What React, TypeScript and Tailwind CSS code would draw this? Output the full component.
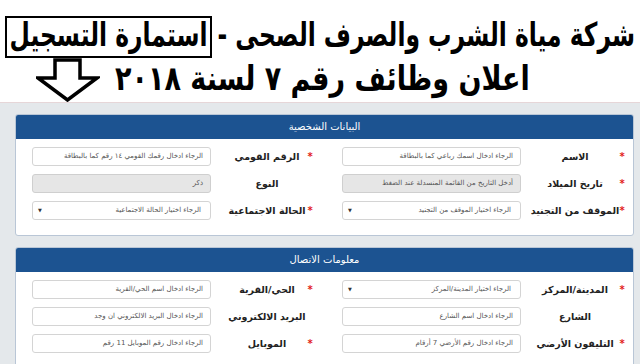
import React from "react";

const FONT = "font-['DejaVu_Sans',sans-serif]";

type Kind = "text" | "disabled" | "select";

function Input({ ph, kind }: { ph: string; kind: Kind }) {
  const base =
    "w-[179px] h-[19px] rounded-[3px] border flex items-center text-[7px] leading-none text-[#555] shrink-0";
  if (kind === "select") {
    return (
      <div className={`${base} bg-white border-[#d4d4d4] justify-between pr-[9px] pl-[5px]`}>
        <span>{ph}</span>
        <span className="text-[5px] text-[#333]">▼</span>
      </div>
    );
  }
  return (
    <div
      className={`${base} pr-[7px] ${
        kind === "disabled" ? "bg-[#e6e6e6] border-[#cfcfcf]" : "bg-white border-[#d4d4d4]"
      }`}
    >
      <span>{ph}</span>
    </div>
  );
}

function Half({
  label,
  req,
  ph,
  kind,
  labelW,
  gap,
}: {
  label: string;
  req: boolean;
  ph: string;
  kind: Kind;
  labelW: string;
  gap: string;
}) {
  return (
    <div className="flex items-center">
      <span className="w-[16px] text-center text-[#e21b1b] text-[10px] font-bold leading-none">
        {req ? "*" : ""}
      </span>
      <div className={`${labelW} flex justify-center`}>
        <span className="text-[9.5px] font-bold text-[#222] whitespace-nowrap leading-none">{label}</span>
      </div>
      <div className={gap} />
      <Input ph={ph} kind={kind} />
    </div>
  );
}

type F = { label: string; req: boolean; ph: string; kind: Kind };

function Row({ r, l }: { r: F; l: F }) {
  return (
    <div className="flex items-center pr-[3px] h-[19px]">
      <Half {...r} labelW="w-[78px]" gap="w-[15px]" />
      <div className="w-[24px]" />
      <Half {...l} labelW="w-[70px]" gap="w-[21px]" />
    </div>
  );
}

function Panel({ title, rows }: { title: string; rows: [F, F][] }) {
  return (
    <div className="ml-[15px] mr-[6px] rounded-[3px] border border-[#b9c6d6] bg-white overflow-hidden">
      <div className="h-[24px] bg-[#1c5391] flex items-center justify-center text-white text-[10px] leading-none">
        {title}
      </div>
      <div className="flex flex-col gap-[8px] pt-[8px] pb-[15px]">
        {rows.map((rw, i) => (
          <Row key={i} r={rw[0]} l={rw[1]} />
        ))}
      </div>
    </div>
  );
}

function Arrow() {
  return (
    <svg width="64" height="44" viewBox="0 0 64 44" className="shrink-0">
      <path
        d="M19 2 H44 V20 H61 L31.5 42 L2 20 H19 Z"
        fill="white"
        stroke="black"
        strokeWidth="3.5"
        strokeLinejoin="miter"
      />
    </svg>
  );
}

export default function App() {
  return (
    <div dir="rtl" className={`${FONT} w-[640px] h-[364px] overflow-hidden bg-[#e4e8eb]`}>
      <div className="h-[103px] bg-white border-b border-[#e6d6d8] flex flex-col">
        <div className="pt-[16px] pr-[5px] flex items-start h-[58px] text-[23.4px] font-bold text-black leading-none whitespace-nowrap">
          <span className="inline-block scale-y-[1.4] mt-[8px]">شركة مياة الشرب والصرف الصحى - </span>
          <span className="border-2 border-black h-[42px] px-[3px] mr-[5px] flex items-center">
            <span className="inline-block scale-y-[1.4] mb-[2px]">استمارة التسجيل</span>
          </span>
        </div>
        <div className="flex items-end h-[45px]" dir="ltr">
          <div className="ml-[36px] mt-auto">
            <Arrow />
          </div>
          <div
            dir="rtl"
            className="ml-[15px] mb-[10px] text-[27px] font-bold text-black leading-none whitespace-nowrap scale-y-[1.25]"
          >
            اعلان وظائف رقم ٧ لسنة ٢٠١٨
          </div>
        </div>
      </div>
      <div className="pt-[11px]">
        <Panel
          title="البيانات الشخصية"
          rows={[
            [
              { label: "الاسم", req: true, ph: "الرجاء ادخال اسمك رباعي كما بالبطاقة", kind: "text" },
              { label: "الرقم القومي", req: true, ph: "الرجاء ادخال رقمك القومي ١٤ رقم كما بالبطاقة", kind: "text" },
            ],
            [
              { label: "تاريخ الميلاد", req: true, ph: "أدخل التاريخ من القائمة المنسدلة عند الضغط", kind: "disabled" },
              { label: "النوع", req: false, ph: "ذكر", kind: "disabled" },
            ],
            [
              { label: "الموقف من التجنيد", req: true, ph: "الرجاء اختيار الموقف من التجنيد", kind: "select" },
              { label: "الحالة الاجتماعية", req: true, ph: "الرجاء اختيار الحالة الاجتماعية", kind: "select" },
            ],
          ]}
        />
        <div className="h-[11px]" />
        <Panel
          title="معلومات الاتصال"
          rows={[
            [
              { label: "المدينة/المركز", req: true, ph: "الرجاء اختيار المدينة/المركز", kind: "select" },
              { label: "الحي/القرية", req: true, ph: "الرجاء ادخال اسم الحي/القرية", kind: "text" },
            ],
            [
              { label: "الشارع", req: false, ph: "الرجاء ادخال اسم الشارع", kind: "text" },
              { label: "البريد الالكتروني", req: false, ph: "الرجاء ادخال البريد الالكتروني ان وجد", kind: "text" },
            ],
            [
              { label: "التليفون الأرضي", req: true, ph: "الرجاء ادخال رقم الأرضي 7 أرقام", kind: "text" },
              { label: "الموبايل", req: true, ph: "الرجاء ادخال رقم الموبايل 11 رقم", kind: "text" },
            ],
          ]}
        />
      </div>
    </div>
  );
}
